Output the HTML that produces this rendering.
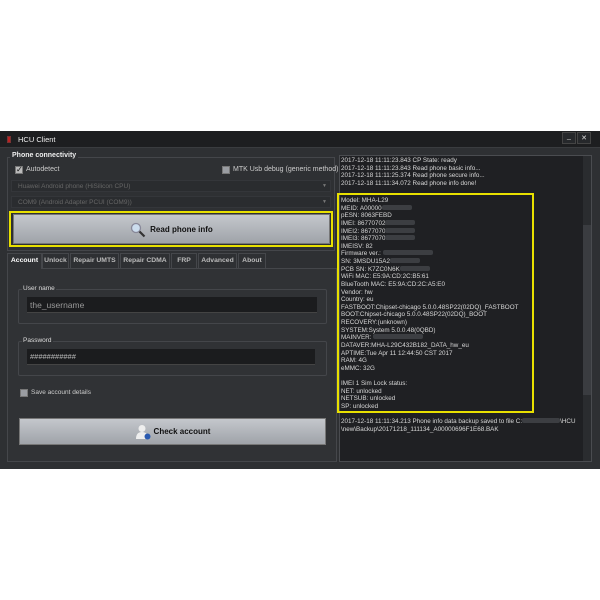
<!DOCTYPE html>
<html><head><meta charset="utf-8"><style>
*{margin:0;padding:0;box-sizing:border-box}
body{width:600px;height:600px;background:#fff;position:relative;overflow:hidden;font-family:"Liberation Sans",sans-serif;font-size:7px;color:#ddd}
.a{position:absolute}
.win{left:0;top:131px;width:600px;height:338px;background:#2e3033}
.title{left:0;top:131px;width:600px;height:17px;background:#1d1e20;border-bottom:1px solid #3a3c3f}
.cb{width:8px;height:8px;background:#9a9da2;border:1px solid #777}
.combo{height:12px;background:#2a2c2f;border:1px solid #34363a;color:#666;padding-left:6px;line-height:11px;font-size:6.5px}
.combo:after{content:"▼";position:absolute;right:3px;top:0;font-size:5px;color:#777}
.btn{background:linear-gradient(#c4c7cc,#9fa3a9);border:1px solid #777;color:#111;font-weight:bold;font-size:8px;text-align:center}
.tab{top:253px;height:15px;background:#2e3033;border:1px solid #45474b;border-bottom:none;color:#bbb;font-weight:bold;font-size:6.8px;text-align:center;line-height:14px}
.grp{border:1px solid #44464a;border-radius:2px}
.inp{background:#1b1c1e;border-bottom:1px solid #444}
.log{left:339px;top:155px;width:253px;height:307px;background:#1f2023;border:1px solid #4a4c50}
.ln{line-height:7.63px;font-size:6.3px;color:#d8d8d8;white-space:pre}
.blur{display:inline-block;width:30px;height:5px;background:#3c3e42;vertical-align:baseline;border-radius:2px;line-height:0}
</style></head><body>
<div class="a win"></div>
<div class="a title"></div>
<div class="a" style="left:7px;top:136px;width:4px;height:7px;background:#b22;border:1px solid #733"></div>
<div class="a" style="left:18px;top:135px;font-size:7.5px;color:#eee">HCU Client</div>
<div class="a" style="left:562px;top:132px;width:14px;height:12px;background:#26282b;border:1px solid #444;color:#ddd;text-align:center;font-size:7px">_</div>
<div class="a" style="left:577px;top:132px;width:14px;height:12px;background:#26282b;border:1px solid #444;color:#ddd;text-align:center;font-size:7px;line-height:11px">✕</div>

<div class="a" style="left:7px;top:157px;width:328px;height:94px;border:1px solid #44464a"></div>
<div class="a" style="left:10px;top:152px;background:#2e3033;padding:0 2px;font-weight:bold;font-size:7px;color:#eee">Phone connectivity</div>
<div class="a cb" style="left:15px;top:166px;background:#bbb;color:#111;font-size:8px;line-height:6px">✓</div>
<div class="a" style="left:26px;top:166px;color:#ccc">Autodetect</div>
<div class="a cb" style="left:222px;top:166px"></div>
<div class="a" style="left:233px;top:166px;color:#ccc">MTK Usb debug (generic method)</div>
<div class="a combo" style="left:11px;top:180px;width:320px">Huawei Android phone (HiSilicon CPU)</div>
<div class="a combo" style="left:11px;top:196px;width:320px">COM9 (Android Adapter PCUI (COM9))</div>
<div class="a" style="left:9px;top:211px;width:324px;height:36px;border:2px solid #e8e000"></div>
<div class="a btn" style="left:13px;top:214px;width:317px;height:30px;line-height:29px">
<svg width="16" height="16" viewBox="0 0 16 16" style="vertical-align:middle;margin-right:4px"><circle cx="6" cy="6" r="4.5" fill="#cde" stroke="#889" stroke-width="1.3"/><line x1="9.5" y1="9.5" x2="14.5" y2="14.5" stroke="#333" stroke-width="2.2"/></svg>Read phone info</div>

<div class="a" style="left:7px;top:268px;width:330px;height:194px;border:1px solid #45474b;background:#303235"></div>
<div class="a tab" style="left:7px;width:35px;height:16px;background:#303235;color:#fff">Account</div>
<div class="a tab" style="left:42px;width:27px">Unlock</div>
<div class="a tab" style="left:70px;width:49px">Repair UMTS</div>
<div class="a tab" style="left:120px;width:50px">Repair CDMA</div>
<div class="a tab" style="left:171px;width:26px">FRP</div>
<div class="a tab" style="left:198px;width:39px">Advanced</div>
<div class="a tab" style="left:238px;width:28px">About</div>

<div class="a grp" style="left:18px;top:289px;width:309px;height:35px"></div>
<div class="a" style="left:22px;top:285px;background:#303235;padding:0 1px;font-size:6.5px;color:#ddd">User name</div>
<div class="a inp" style="left:27px;top:297px;width:290px;height:16px;color:#999;font-size:8.5px;padding-left:3px;line-height:16px">the_username</div>
<div class="a grp" style="left:18px;top:341px;width:309px;height:35px"></div>
<div class="a" style="left:22px;top:337px;background:#303235;padding:0 1px;font-size:6.5px;color:#ddd">Password</div>
<div class="a inp" style="left:27px;top:349px;width:288px;height:16px;color:#bbb;font-size:7.5px;padding-left:3px;line-height:16px">###########</div>
<div class="a cb" style="left:20px;top:389px"></div>
<div class="a" style="left:31px;top:389px;font-size:6.5px;color:#ccc">Save account details</div>
<div class="a btn" style="left:19px;top:418px;width:307px;height:27px;line-height:26px">
<svg width="16" height="16" viewBox="0 0 16 16" style="vertical-align:middle;margin-right:3px"><circle cx="7" cy="4.5" r="3.5" fill="#eee"/><path d="M1 15 Q1 8 7 8 Q13 8 13 15Z" fill="#eee"/><circle cx="12.5" cy="12.5" r="3" fill="#2a5ab0"/></svg>Check account</div>

<div class="a log"></div>
<div class="a" style="left:583px;top:156px;width:8px;height:305px;background:#2a2c2f"></div>
<div class="a" style="left:583px;top:225px;width:8px;height:170px;background:#3a3c40"></div>
<div class="a ln" style="left:341px;top:157px">2017-12-18 11:11:23.843 CP State: ready
2017-12-18 11:11:23.843 Read phone basic info...
2017-12-18 11:11:25.374 Read phone secure info...
2017-12-18 11:11:34.072 Read phone info done!</div>
<div class="a" style="left:337px;top:193px;width:197px;height:220px;border:2px solid #e8e000"></div>
<div class="a ln" style="left:341px;top:197px">Model: MHA-L29
MEID: A00000<span class="blur"></span>
pESN: 8063FEBD
IMEI: 86770702<span class="blur"></span>
IMEI2: 8677070<span class="blur"></span>
IMEI3: 8677070<span class="blur"></span>
IMEISV: 82
Firmware ver.: <span class="blur" style="width:50px"></span>
SN: 3MSDU15A2<span class="blur"></span>
PCB SN: K7ZC0N6K<span class="blur"></span>
WiFi MAC: E5:9A:CD:2C:B5:61
BlueTooth MAC: E5:9A:CD:2C:A5:E0
Vendor: hw
Country: eu
FASTBOOT:Chipset-chicago 5.0.0.48SP22(02DQ)_FASTBOOT
BOOT:Chipset-chicago 5.0.0.48SP22(02DQ)_BOOT
RECOVERY:(unknown)
SYSTEM:System 5.0.0.48(0QBD)
MAINVER: <span class="blur" style="width:50px"></span>
DATAVER:MHA-L29C432B182_DATA_hw_eu
APTIME:Tue Apr 11 12:44:50 CST 2017
RAM: 4G
eMMC: 32G

IMEI 1 Sim Lock status:
NET: unlocked
NETSUB: unlocked
SP: unlocked</div>
<div class="a ln" style="left:341px;top:418px">2017-12-18 11:11:34.213 Phone info data backup saved to file C:<span class="blur" style="width:38px"></span>\HCU
\new\Backup\20171218_111134_A00000696F1E68.BAK</div>
</body></html>
